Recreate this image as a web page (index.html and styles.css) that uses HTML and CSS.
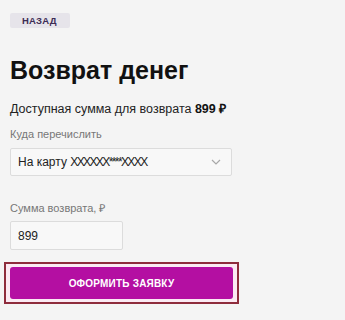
FILE: index.html
```html
<!DOCTYPE html>
<html lang="ru">
<head>
<meta charset="utf-8">
<link rel="stylesheet" href="styles.css">
</head>
<body>
<div class="page">
  <div class="back">НАЗАД</div>
  <h1 class="title">Возврат денег</h1>
  <p class="available">Доступная сумма для возврата <b>899&nbsp;₽</b></p>
  <div class="label label-first">Куда перечислить</div>
  <div class="select">
    <span class="select-text">На карту <span class="mask">XXXXXX****XXXX</span></span>
    <svg class="chev" width="10" height="6" viewBox="0 0 10 6"><path d="M1 1 L5 5 L9 1" fill="none" stroke="#a8a8a8" stroke-width="1.2"/></svg>
  </div>
  <div class="label label-second">Сумма возврата, ₽</div>
  <div class="input">899</div>
  <div class="highlight">
    <div class="btn">ОФОРМИТЬ ЗАЯВКУ</div>
  </div>
</div>
</body>
</html>
```
FILE: styles.css
```css
html, body {
  margin: 0;
  padding: 0;
  background: #f4f4f4;
}
.page {
  width: 345px;
  height: 320px;
  box-sizing: border-box;
  padding: 10px 0 0 10px;
  font-family: "Liberation Sans", Arial, sans-serif;
  color: #1e1e1e;
  overflow: hidden;
}
.back {
  display: inline-flex;
  align-items: center;
  height: 15px;
  padding: 0 13px 0 12px;
  background: #e6e4ea;
  border-radius: 2px;
  font-size: 9.5px;
  font-weight: bold;
  color: #3d2c55;
  letter-spacing: 0.2px;
}
.title {
  margin: 26px 0 0;
  font-size: 25px;
  line-height: 32px;
  font-weight: bold;
  color: #111;
}
.available {
  margin: 15px 0 0;
  font-size: 12.5px;
  line-height: 16px;
  color: #222;
}
.available b {
  font-weight: bold;
  color: #111;
}
.label {
  font-size: 11px;
  line-height: 14px;
  color: #777;
}
.label-first {
  margin-top: 10px;
}
.label-second {
  margin-top: 25px;
}
.select {
  margin-top: 7px;
  width: 222px;
  height: 28px;
  box-sizing: border-box;
  border: 1px solid #dcdcdc;
  background: #f8f8f8;
  border-radius: 2px;
  display: flex;
  align-items: center;
  justify-content: space-between;
  padding: 0 10px 0 7px;
}
.select-text {
  font-size: 12px;
  color: #222;
}
.mask {
  letter-spacing: -1.6px;
}
.chev {
  display: block;
}
.input {
  margin-top: 6px;
  width: 113px;
  height: 29px;
  box-sizing: border-box;
  border: 1px solid #dcdcdc;
  background: #f8f8f8;
  border-radius: 2px;
  display: flex;
  align-items: center;
  padding-left: 7px;
  font-size: 12px;
  color: #222;
}
.highlight {
  margin: 12px 0 0 -6px;
  width: 235px;
  box-sizing: border-box;
  border: 2px solid #8e2c3c;
  padding: 3px 4px;
  background: #fbeaf3;
}
.btn {
  height: 32px;
  border-radius: 3px;
  background: #b40fa2;
  color: #fff;
  font-size: 10px;
  font-weight: bold;
  display: flex;
  align-items: center;
  justify-content: center;
  letter-spacing: 0.2px;
}
```
